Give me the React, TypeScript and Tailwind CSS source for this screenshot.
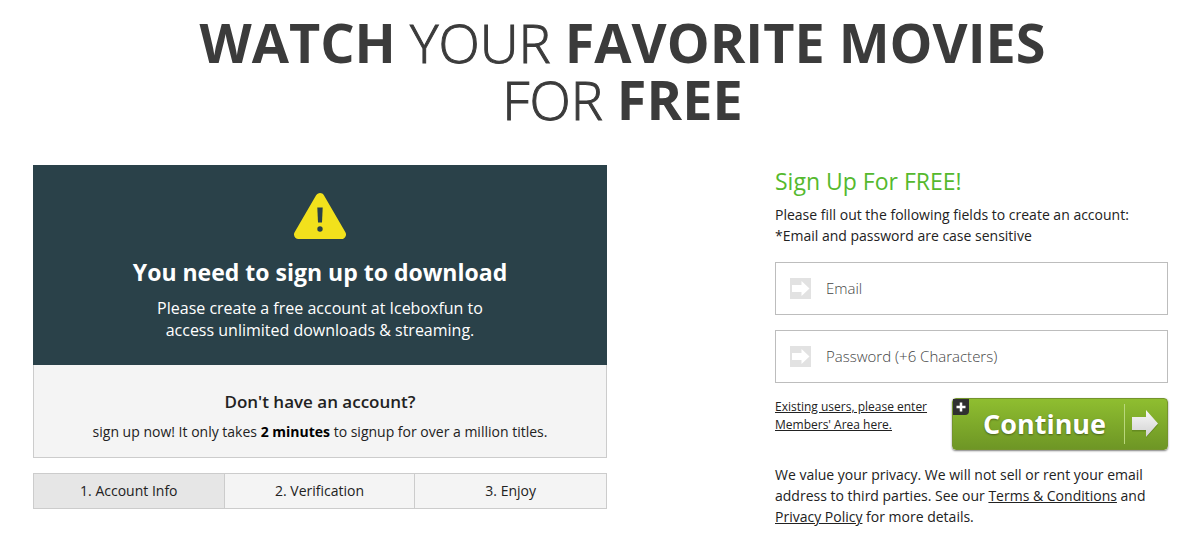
import React from "react";

function WarningIcon() {
  return (
    <svg width="54" height="48" viewBox="0 0 54 48" aria-hidden="true">
      <path d="M27 5.500 L48.500 42.500 H5.500 Z" fill="#f2e11c" stroke="#f2e11c" strokeWidth="9" strokeLinejoin="round" />
      <path d="M24.300 15.500 H29.700 L29 30.500 H25 Z" fill="#2a4149" />
      <circle cx="27" cy="37" r="2.700" fill="#2a4149" />
    </svg>
  );
}

function FieldArrow() {
  return (
    <svg width="21" height="21" viewBox="0 0 21 21" aria-hidden="true" className="shrink-0">
      <rect width="21" height="21" fill="#e2e2e2" />
      <path d="M2 7 H11.500 V3 L19.500 10.500 L11.500 18 V14 H2 Z" fill="#fff" />
    </svg>
  );
}

function ContinueArrow() {
  return (
    <svg width="28" height="30" viewBox="0 0 28 30" aria-hidden="true" className="shrink-0">
      <defs>
        <linearGradient id="arrowFill" x1="0" y1="0" x2="0" y2="1">
          <stop offset="0" stopColor="#f8f8f8" />
          <stop offset="1" stopColor="#d2d2d2" />
        </linearGradient>
      </defs>
      <path d="M1 9.500 H15 V3 L27 16 L15 29 V22.500 H1 Z" fill="#4c6c18" opacity="0.450" />
      <path d="M1 8 H15 V1 L27 14.500 L15 28 V21 H1 Z" fill="url(#arrowFill)" />
    </svg>
  );
}

function Field({ label, type }: { label: string; type: string }) {
  return (
    <label className="flex h-[53px] items-center gap-[15px] border border-[#bdbdbd] bg-white pl-[14px]">
      <FieldArrow />
      <input
        type={type}
        aria-label={label}
        placeholder={label}
        className="h-full min-w-0 flex-1 bg-transparent pb-[2px] text-[15px] font-light text-[#444] outline-none placeholder:text-[#444]"
      />
    </label>
  );
}

const steps = ["1. Account Info", "2. Verification", "3. Enjoy"];

export default function App() {
  return (
    <main className="bg-white pb-5 pl-[33px] pr-8 pt-[14px] font-['Open_Sans','Noto_Sans',sans-serif] text-sm text-[#222]">
      <h1 className="pl-11 text-center text-[54px] font-bold leading-[57px] text-[#3b3b3b]">
        WATCH <span className="font-light [-webkit-text-stroke:1px_#3b3b3b]">YOUR</span> FAVORITE MOVIES
        <br />
        <span className="font-light [-webkit-text-stroke:1px_#3b3b3b]">FOR</span> FREE
      </h1>

      <div className="mt-[37px] flex items-start justify-between gap-8">
        <section className="w-full max-w-[574px] text-center">
          <div className="flex flex-col items-center bg-[#2a4149] pb-6 pt-[27px] text-white">
            <WarningIcon />
            <h2 className="mt-[17px] text-[23px] font-bold leading-[30px]">You need to sign up to download</h2>
            <p className="mt-[10px] text-base leading-[22px]">
              Please create a free account at Iceboxfun to
              <br />
              access unlimited downloads &amp; streaming.
            </p>
          </div>
          <div className="border border-t-0 border-[#ccc] bg-[#f4f4f4] pb-[15px] pt-[25px]">
            <h3 className="text-[17px] font-semibold leading-6">Don't have an account?</h3>
            <p className="mt-2 leading-5">
              sign up now! It only takes <strong className="text-black">2 minutes</strong> to signup for over a million
              titles.
            </p>
          </div>
          <ol className="mt-[15px] grid grid-cols-3 divide-x divide-[#ccc] border border-[#ccc] bg-[#f4f4f4]">
            {steps.map((step, i) => (
              <li key={step} className={i === 0 ? "bg-[#e6e6e6] py-[7px]" : "py-[7px]"}>
                {step}
              </li>
            ))}
          </ol>
        </section>

        <form className="w-full max-w-[393px]" onSubmit={(e) => e.preventDefault()}>
          <h2 className="text-[23px] font-medium leading-8 text-[#55b92e]">Sign Up For FREE!</h2>
          <p className="mt-[7px] leading-[21px]">
            Please fill out the following fields to create an account:
            <br />
            *Email and password are case sensitive
          </p>
          <div className="mt-4 flex flex-col gap-[15px]">
            <Field label="Email" type="email" />
            <Field label="Password (+6 Characters)" type="password" />
          </div>
          <div className="mt-[15px] flex items-start justify-between">
            <a href="#members" className="text-xs leading-[18px] underline">
              Existing users, please enter
              <br />
              Members' Area here.
            </a>
            <button
              type="submit"
              className="relative flex h-[52px] w-[216px] shrink-0 items-center justify-between rounded border border-[#74942c] bg-linear-to-b from-[#8fbe30] to-[#6e9625] pl-[30px] pr-2 text-white shadow-[0_1px_2px_rgba(0,0,0,0.500)]"
            >
              <span className="absolute left-0 top-0 flex size-4 items-center justify-center rounded-br bg-[#303030]">
                <svg width="10" height="10" viewBox="0 0 10 10" aria-hidden="true">
                  <path d="M5 0.500 V9.500 M0.500 5 H9.500" stroke="#fff" strokeWidth="2.500" />
                </svg>
              </span>
              <span className="text-[27px] font-bold [text-shadow:0_1px_2px_rgba(0,0,0,0.400)]">Continue</span>
              <span className="flex items-center gap-[6px]">
                <span className="h-10 w-px bg-[#b9d77c]" />
                <ContinueArrow />
              </span>
            </button>
          </div>
          <p className="mt-[14px] leading-[21px]">
            We value your privacy. We will not sell or rent your email address to third parties. See our{" "}
            <a href="#terms" className="underline">
              Terms &amp; Conditions
            </a>{" "}
            and{" "}
            <a href="#privacy" className="underline">
              Privacy Policy
            </a>{" "}
            for more details.
          </p>
        </form>
      </div>
    </main>
  );
}
